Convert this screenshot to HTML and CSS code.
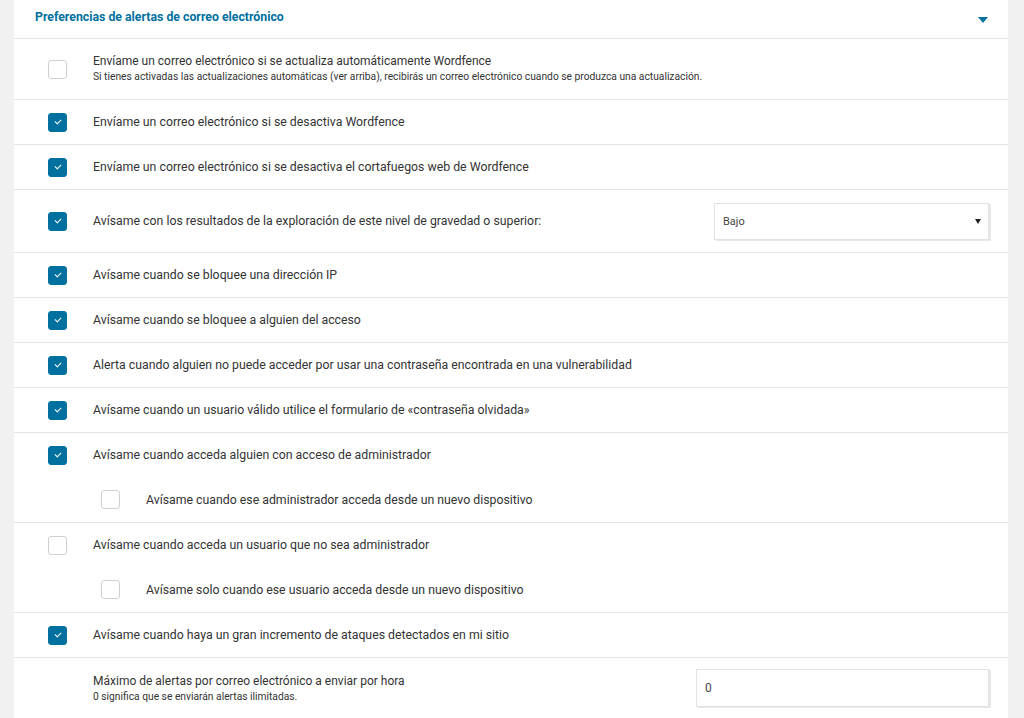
FILE: index.html
```html
<!DOCTYPE html>
<html lang="es">
<head>
<meta charset="utf-8">
<title>Preferencias de alertas</title>
<link rel="stylesheet" href="styles.css">
</head>
<body>
<div class="panel">
  <div class="panel-head">
    <span class="panel-title">Preferencias de alertas de correo electrónico</span>
    <span class="caret"></span>
  </div>

  <div class="row row-tall">
    <span class="cb"></span>
    <div class="label">
      <div class="main main-first">Envíame un correo electrónico si se actualiza automáticamente Wordfence</div>
      <div class="sub">Si tienes activadas las actualizaciones automáticas (ver arriba), recibirás un correo electrónico cuando se produzca una actualización.</div>
    </div>
  </div>

  <div class="row"><span class="cb on"></span><div class="label"><div class="main">Envíame un correo electrónico si se desactiva Wordfence</div></div></div>
  <div class="row"><span class="cb on"></span><div class="label"><div class="main">Envíame un correo electrónico si se desactiva el cortafuegos web de Wordfence</div></div></div>

  <div class="row row-select">
    <span class="cb on"></span>
    <div class="label grow"><div class="main">Avísame con los resultados de la exploración de este nivel de gravedad o superior:</div></div>
    <div class="select"><span>Bajo</span><span class="sel-arrow"></span></div>
  </div>

  <div class="row"><span class="cb on"></span><div class="label"><div class="main">Avísame cuando se bloquee una dirección IP</div></div></div>
  <div class="row"><span class="cb on"></span><div class="label"><div class="main">Avísame cuando se bloquee a alguien del acceso</div></div></div>
  <div class="row"><span class="cb on"></span><div class="label"><div class="main">Alerta cuando alguien no puede acceder por usar una contraseña encontrada en una vulnerabilidad</div></div></div>
  <div class="row"><span class="cb on"></span><div class="label"><div class="main">Avísame cuando un usuario válido utilice el formulario de «contraseña olvidada»</div></div></div>

  <div class="group">
    <div class="line"><span class="cb on"></span><div class="label"><div class="main">Avísame cuando acceda alguien con acceso de administrador</div></div></div>
    <div class="line indent"><span class="cb"></span><div class="label"><div class="main">Avísame cuando ese administrador acceda desde un nuevo dispositivo</div></div></div>
  </div>

  <div class="group">
    <div class="line"><span class="cb"></span><div class="label"><div class="main">Avísame cuando acceda un usuario que no sea administrador</div></div></div>
    <div class="line indent"><span class="cb"></span><div class="label"><div class="main">Avísame solo cuando ese usuario acceda desde un nuevo dispositivo</div></div></div>
  </div>

  <div class="row"><span class="cb on"></span><div class="label"><div class="main">Avísame cuando haya un gran incremento de ataques detectados en mi sitio</div></div></div>

  <div class="row row-input">
    <span class="cb-space"></span>
    <div class="label grow">
      <div class="main main-first">Máximo de alertas por correo electrónico a enviar por hora</div>
      <div class="sub">0 significa que se enviarán alertas ilimitadas.</div>
    </div>
    <div class="input">0</div>
  </div>
</div>
</body>
</html>
```

FILE: styles.css
```css
* { box-sizing: border-box; }
html, body { margin: 0; padding: 0; }
body {
  background: #f1f1f1;
  font-family: Roboto, "Liberation Sans", Arial, sans-serif;
  color: #333;
  height: 718px;
  overflow: hidden;
}
.panel {
  margin-left: 14px;
  width: 994px;
  background: #fff;
}
.panel-head {
  height: 39px;
  display: flex;
  align-items: center;
  justify-content: space-between;
  padding: 0 20px 5px 21px;
  border-bottom: 1px solid #e4e4e4;
}
.panel-title {
  color: #00709e;
  font-size: 12.3px;
  font-weight: 700;
}
.caret {
  width: 0; height: 0;
  border-left: 5px solid transparent;
  border-right: 5px solid transparent;
  border-top: 6px solid #00709e;
  margin-top: 6px;
}
.row {
  display: flex;
  align-items: center;
  min-height: 45px;
  padding: 0 19px 0 34px;
  border-bottom: 1px solid #e4e4e4;
}
.row-tall { min-height: 61px; padding-bottom: 2px; }
.row-select { min-height: 63px; }
.row-input { min-height: 62px; padding-bottom: 1px; }
.group {
  border-bottom: 1px solid #e4e4e4;
  padding: 0 19px 0 34px;
}
.line {
  display: flex;
  align-items: center;
  height: 45px;
}
.line:first-child { height: 44px; }
.line.indent { padding-left: 53px; }
.cb {
  flex: none;
  width: 19px;
  height: 19px;
  border: 1px solid #cfcfcf;
  border-radius: 3px;
  background: #fff;
  margin-right: 26px;
  position: relative;
}
.row-tall .cb { margin-top: 2px; }
.cb.on {
  background: #00709e;
  border-color: #00709e;
}
.cb.on::after {
  content: "";
  position: absolute;
  left: 6px;
  top: 5px;
  width: 5px;
  height: 3px;
  border-left: 1.3px solid #fff;
  border-bottom: 1.3px solid #fff;
  transform: rotate(-45deg);
}
.cb-space { flex: none; width: 19px; margin-right: 26px; }
.label { min-width: 0; }
.grow { flex: 1; }
.main {
  font-size: 12.3px;
  line-height: 16px;
  color: #333;
}
.main.main-first { font-size: 12px; }
.sub {
  font-size: 10.25px;
  line-height: 13px;
  color: #333;
  margin-top: 1px;
}
.select {
  flex: none;
  width: 275px;
  height: 37px;
  border: 1px solid #e2e2e2;
  box-shadow: 2px 1px 0 #e8e8e8;
  display: flex;
  align-items: center;
  justify-content: space-between;
  padding: 0 7px 0 8px;
  font-size: 11px;
  color: #444;
}
.sel-arrow {
  width: 0; height: 0;
  border-left: 3.5px solid transparent;
  border-right: 3.5px solid transparent;
  border-top: 5px solid #222;
}
.input {
  flex: none;
  width: 293px;
  height: 38px;
  border: 1px solid #e2e2e2;
  box-shadow: 2px 1px 0 #e8e8e8;
  display: flex;
  align-items: center;
  padding: 0 8px;
  font-size: 12px;
  color: #444;
}
```
